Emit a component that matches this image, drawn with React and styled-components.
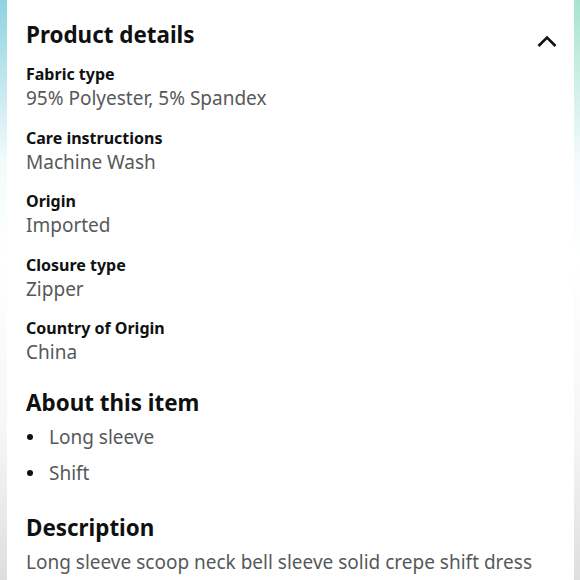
import React from 'react';
import styled, { createGlobalStyle } from 'styled-components';

const GlobalStyle = createGlobalStyle`
  html, body {
    margin: 0;
    padding: 0;
    background: #fff;
  }
  body {
    font-family: 'Noto Sans', 'Liberation Sans', sans-serif;
    -webkit-font-smoothing: antialiased;
  }
`;

const Frame = styled.div`
  display: flex;
  width: 580px;
  height: 580px;
  overflow: hidden;
`;

const Edge = styled.div`
  flex: 0 0 ${(p) => p.width}px;
  background: linear-gradient(
    to bottom,
    ${(p) => p.tint} 0%,
    #f4fbfb 28%,
    #ffffff 45%,
    #f6f6f6 75%,
    #dedede 100%
  );
`;

const Card = styled.div`
  flex: 1;
  background: #fff;
  padding: 21px 17px 0 19px;
  color: #0f1111;
`;

const HeaderRow = styled.div`
  display: flex;
  justify-content: space-between;
  align-items: flex-start;
`;

const Heading = styled.h2`
  margin: ${(p) => p.top || 0}px 0 0;
  font-size: 22.4px;
  line-height: 28px;
  font-weight: 700;
  color: #0f1111;
`;

const Toggle = styled.button`
  border: none;
  background: none;
  padding: 0;
  margin-top: 14px;
  display: flex;
  cursor: pointer;
`;

const DetailList = styled.dl`
  margin: 14px 0 0;
  display: flex;
  flex-direction: column;
  gap: 15.5px;
`;

const Detail = styled.div`
  display: flex;
  flex-direction: column;
`;

const Label = styled.dt`
  font-size: 16px;
  line-height: 22px;
  font-weight: 700;
  color: #0f1111;
`;

const Value = styled.dd`
  margin: 0;
  font-size: 19px;
  line-height: 26px;
  color: #565959;
`;

const Bullets = styled.ul`
  list-style: none;
  margin: 7px 0 0;
  padding: 0;
  display: flex;
  flex-direction: column;
  gap: 10px;
`;

const Bullet = styled.li`
  display: flex;
  align-items: center;
  font-size: 19px;
  line-height: 26px;
  color: #565959;

  &::before {
    content: '';
    width: 6px;
    height: 6px;
    border-radius: 50%;
    background: #0f1111;
    margin: 0 16px 0 1px;
  }
`;

const Paragraph = styled.p`
  margin: 7px 0 0;
  font-size: 19px;
  line-height: 26px;
  color: #565959;
  white-space: nowrap;
`;

const details = [
  ['Fabric type', '95% Polyester, 5% Spandex'],
  ['Care instructions', 'Machine Wash'],
  ['Origin', 'Imported'],
  ['Closure type', 'Zipper'],
  ['Country of Origin', 'China'],
];

const ChevronUp = () => (
  <svg width="20" height="13" viewBox="0 0 20 13">
    <polyline
      points="1.5,11 10,2.5 18.5,11"
      fill="none"
      stroke="#0f1111"
      strokeWidth="2.6"
    />
  </svg>
);

export default function App() {
  return (
    <>
      <GlobalStyle />
      <Frame>
        <Edge width={7} tint="#8dd3e1" />
        <Card>
          <HeaderRow>
            <Heading>Product details</Heading>
            <Toggle aria-label="Collapse">
              <ChevronUp />
            </Toggle>
          </HeaderRow>
          <DetailList>
            {details.map(([label, value]) => (
              <Detail key={label}>
                <Label>{label}</Label>
                <Value>{value}</Value>
              </Detail>
            ))}
          </DetailList>

          <Heading top={24}>About this item</Heading>
          <Bullets>
            <Bullet>Long sleeve</Bullet>
            <Bullet>Shift</Bullet>
          </Bullets>

          <Heading top={28}>Description</Heading>
          <Paragraph>Long sleeve scoop neck bell sleeve solid crepe shift dress</Paragraph>
        </Card>
        <Edge width={6} tint="#a6e4cf" />
      </Frame>
    </>
  );
}
